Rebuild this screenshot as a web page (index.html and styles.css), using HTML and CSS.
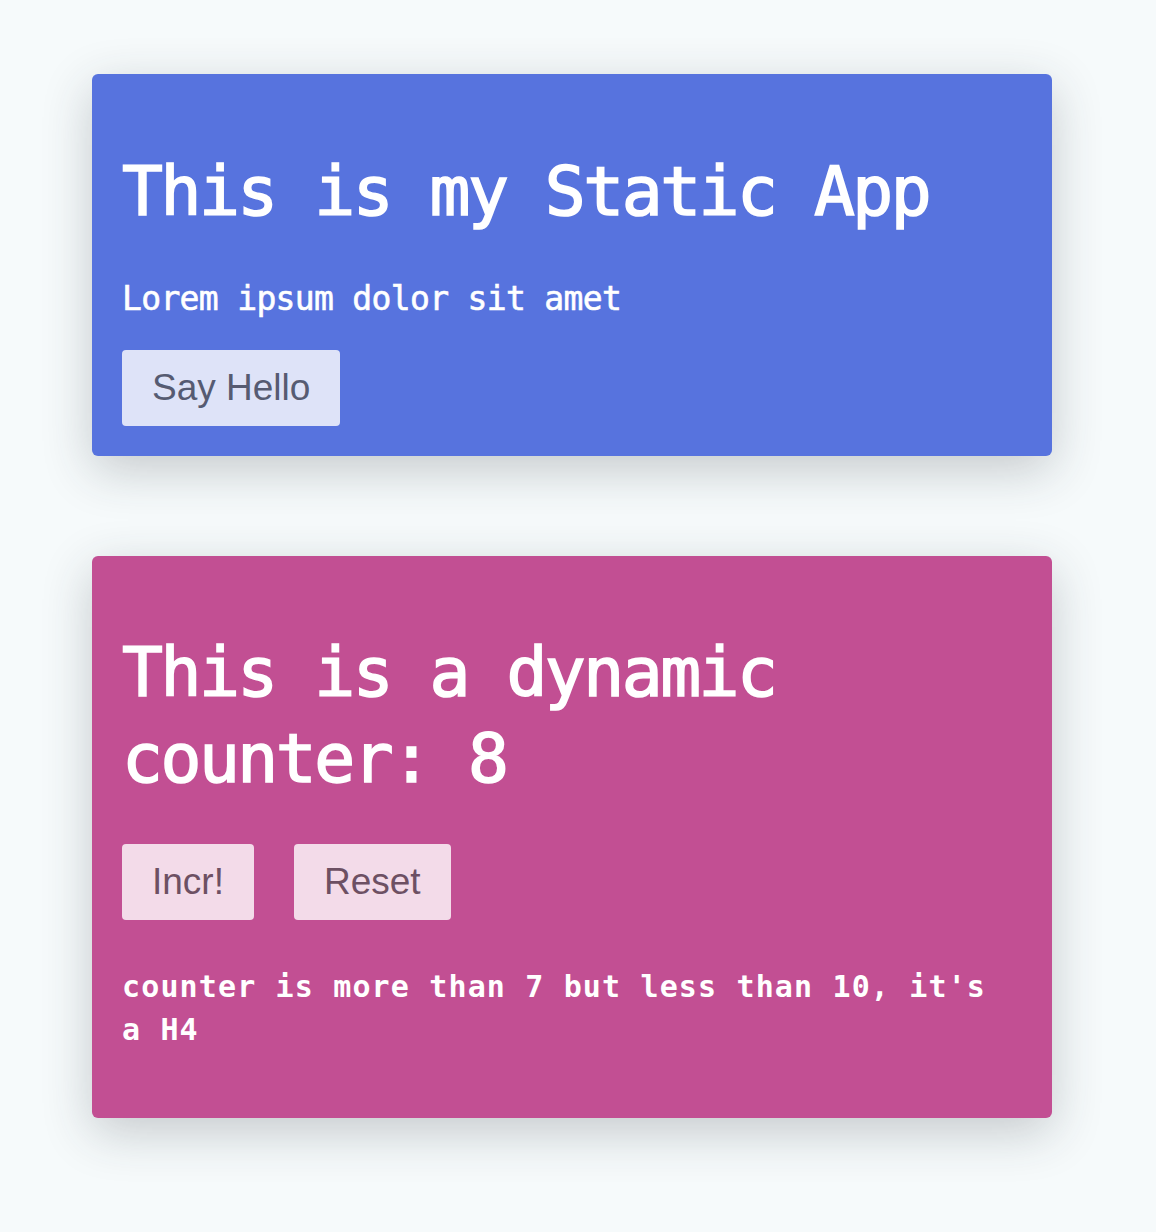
FILE: index.html
```html
<!DOCTYPE html>
<html lang="en">
<head>
<meta charset="utf-8">
<title>Static App</title>
<link rel="stylesheet" href="styles.css">
</head>
<body>
<main class="page">
  <section class="card card-static">
    <h1 class="title">This is my Static App</h1>
    <p class="lead">Lorem ipsum dolor sit amet</p>
    <div class="actions">
      <button class="btn btn-blue" type="button">Say Hello</button>
    </div>
  </section>
  <section class="card card-dynamic">
    <h1 class="title title-dyn">This is a dynamic counter: 8</h1>
    <div class="actions">
      <button class="btn btn-pink" type="button">Incr!</button>
      <button class="btn btn-pink" type="button">Reset</button>
    </div>
    <h4 class="note">counter is more than 7 but less than 10, it's a H4</h4>
  </section>
</main>
</body>
</html>
```
FILE: styles.css
```css
html, body {
  margin: 0;
  padding: 0;
  background: #f6fafb;
}
body {
  font-family: "DejaVu Sans Mono", "Liberation Mono", monospace;
  color: #fff;
}
.page {
  display: flex;
  flex-direction: column;
  gap: 100px;
  width: 960px;
  padding: 74px 0 114px 92px;
}
.card {
  border-radius: 6px;
  padding: 30px;
  box-shadow: 0 14px 50px rgba(40, 50, 60, 0.24);
}
.card-static {
  background: #5773de;
}
.card-dynamic {
  background: #c24f93;
}
.title {
  margin: 44.5px 0 0;
  font-size: 68px;
  letter-spacing: -2.5px;
  line-height: 86px;
  font-weight: normal;
  -webkit-text-stroke: 1.6px #fff;
}
.title-dyn {
  width: 900px;
}
.lead {
  margin: 44.8px 0 30.7px;
  font-size: 33px;
  letter-spacing: -0.67px;
  line-height: 40px;
  -webkit-text-stroke: 0.6px #fff;
}
.card-dynamic .actions {
  margin-top: 41.5px;
}
.actions {
  display: flex;
  gap: 40px;
}
.btn {
  height: 76px;
  padding: 0 30px;
  border: 0;
  border-radius: 4px;
  font-family: "Liberation Sans", Arial, sans-serif;
  font-size: 37px;
}
.btn-blue {
  background: #dee3f8;
  color: #565b72;
}
.btn-pink {
  background: #f3dbe9;
  color: #6d5063;
}
.note {
  margin: 45px 0 37px;
  font-size: 30px;
  letter-spacing: 1.14px;
  line-height: 43px;
  font-weight: bold;
}
```
